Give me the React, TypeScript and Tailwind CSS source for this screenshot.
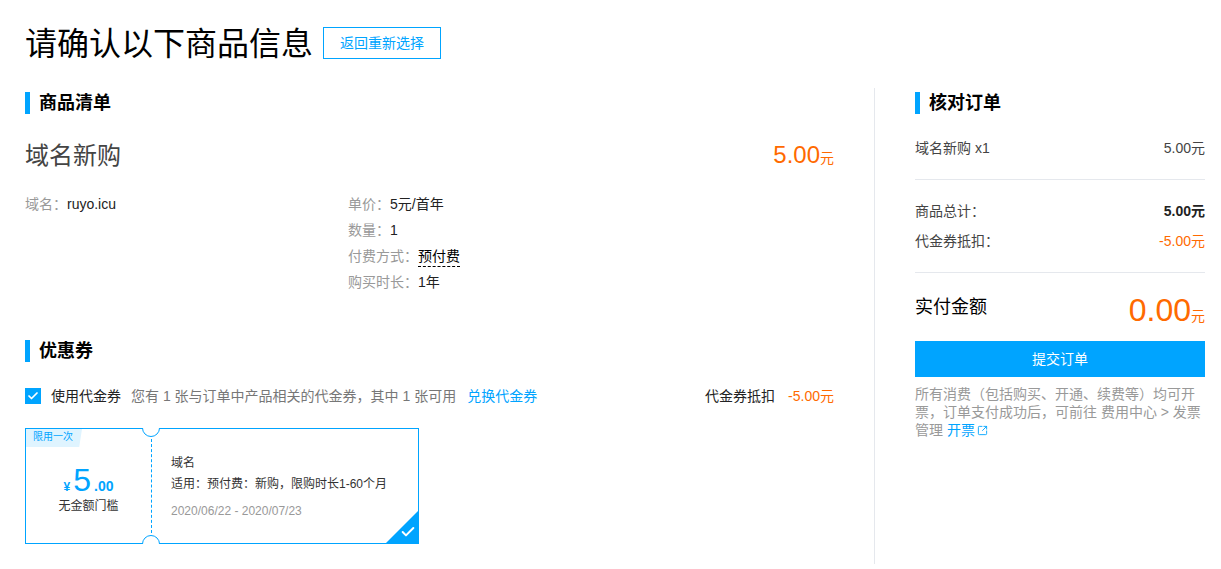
import { Check, SquareArrowOutUpRight } from 'lucide-react';

const FONT = "font-['Liberation_Sans','Noto_Sans_CJK_SC',sans-serif]";

// 全角标点
const COLON = '\uFF1A';
const COMMA = '\uFF0C';
const LP = '\uFF08';
const RP = '\uFF09';

function SectionTitle({ children }: { children: React.ReactNode }) {
  return (
    <div className="flex h-[22px] items-center border-l-[5px] border-[#00a4ff] pl-[9px] text-[18px] font-bold leading-[22px] text-black">
      {children}
    </div>
  );
}

function Info({ label, children }: { label: string; children: React.ReactNode }) {
  return (
    <div className="flex h-[26px] items-center text-[14px] text-[#222]">
      <span className="text-[#999]">{`${label}${COLON}`}</span>
      <span>{children}</span>
    </div>
  );
}

function Coupon() {
  return (
    <div className="relative mt-[22px] flex h-[116px] w-[394px] border border-[#00a4ff]">
      <div className="relative flex w-[125px] flex-col items-center justify-center pt-[5px]">
        <div className="absolute left-0 top-0 h-[18px] w-[56px] bg-[#dff4ff] pl-[7px] text-[10px] leading-[16px] text-[#00a4ff] [clip-path:polygon(0_0,100%_0,95%_100%,0_100%)]">
          限用一次
        </div>
        <div className="flex items-baseline font-bold text-[#00a4ff]">
          <span className="text-[12px]">¥</span>
          <span className="mx-[3px] text-[32px] font-normal leading-[32px]">5</span>
          <span className="text-[14px]">.00</span>
        </div>
        <div className="mt-[1px] text-[12px] leading-[16px] text-[#333]">无金额门槛</div>
      </div>
      <div className="my-[10px] border-l border-dashed border-[#00a4ff]" />
      <div className="flex flex-col pl-[19px] pt-[25px]">
        <div className="text-[12px] leading-[18px] text-[#333]">域名</div>
        <div className="mt-[3px] text-[12px] leading-[18px] text-[#333]">
          {`适用${COLON}预付费${COLON}新购${COMMA}限购时长1-60个月`}
        </div>
        <div className="mt-[9px] text-[12px] leading-[18px] text-[#999]">2020/06/22 - 2020/07/23</div>
      </div>
      {/* 上下半圆缺口 */}
      <div className="absolute left-[116px] top-[-10px] h-[18px] w-[18px] rounded-full border border-[#00a4ff] bg-white" />
      <div className="absolute left-[114px] top-[-12px] h-[11px] w-[22px] bg-white" />
      <div className="absolute bottom-[-10px] left-[116px] h-[18px] w-[18px] rounded-full border border-[#00a4ff] bg-white" />
      <div className="absolute bottom-[-12px] left-[114px] h-[11px] w-[22px] bg-white" />
      <div className="absolute bottom-[-1px] right-[-1px] h-[34px] w-[34px] bg-[#00a4ff] [clip-path:polygon(100%_0,100%_100%,0_100%)]" />
      <Check className="absolute bottom-[3px] right-[2px] h-[16px] w-[16px] text-white" strokeWidth={3} />
    </div>
  );
}

export default function App() {
  return (
    <div className={`${FONT} h-[569px] w-[1221px] overflow-hidden bg-white`}>
      <div className="flex h-[88px] items-start pl-[25px] pt-[21px]">
        <h1 className="text-[32px] font-normal leading-[46px] text-[#000]">请确认以下商品信息</h1>
        <button className="ml-[10px] mt-[6px] h-[32px] w-[118px] border border-[#00a4ff] text-[14px] text-[#00a4ff]">
          返回重新选择
        </button>
      </div>
      <div className="flex">
        <div className="ml-[25px] w-[849px] pr-[40px] pt-[4px]">
          <SectionTitle>商品清单</SectionTitle>
          <div className="mt-[22px] flex items-center justify-between">
            <span className="text-[24px] leading-[36px] text-[#444]">域名新购</span>
            <span className="pt-[1px] text-[24px] leading-[36px] text-[#ff6a00]">
              5.00<span className="text-[14px]">元</span>
            </span>
          </div>
          <div className="mt-[15px] flex">
            <div className="w-[323px]">
              <Info label="域名">ruyo.icu</Info>
            </div>
            <div>
              <Info label="单价">5元/首年</Info>
              <Info label="数量">1</Info>
              <Info label="付费方式">
                <span className="border-b border-dashed border-black pb-[2px] text-black">预付费</span>
              </Info>
              <Info label="购买时长">1年</Info>
            </div>
          </div>
          <div className="mt-[45px]">
            <SectionTitle>优惠券</SectionTitle>
          </div>
          <div className="mt-[24px] flex h-[20px] items-center text-[14px]">
            <span className="flex h-[16px] w-[16px] items-center justify-center bg-[#00a4ff]">
              <Check className="h-[12px] w-[12px] text-white" strokeWidth={3.5} />
            </span>
            <span className="ml-[10px] text-[#222]">使用代金券</span>
            <span className="ml-[10px] text-[#777]">
              {`您有 1 张与订单中产品相关的代金券${COMMA}其中 1 张可用`}
            </span>
            <span className="ml-[11px] text-[#00a4ff]">兑换代金券</span>
            <span className="ml-auto text-[#222]">代金券抵扣</span>
            <span className="ml-[13px] text-[#ff6a00]">-5.00元</span>
          </div>
          <Coupon />
        </div>
        <div className="h-[476px] w-[331px] border-l border-[#e5e8ed] pl-[40px] pt-[4px]">
          <div className="w-[290px]">
            <SectionTitle>核对订单</SectionTitle>
            <div className="mt-[24px] flex justify-between border-b border-[#e5e8ed] pb-[21px] text-[14px] leading-[20px] text-[#444]">
              <span>域名新购 x1</span>
              <span>5.00元</span>
            </div>
            <div className="mt-[21px] flex justify-between text-[14px] leading-[20px] text-[#444]">
              <span>{`商品总计${COLON}`}</span>
              <span className="font-bold text-[#222]">5.00元</span>
            </div>
            <div className="mt-[10px] flex justify-between border-b border-[#e5e8ed] pb-[21px] text-[14px] leading-[20px] text-[#444]">
              <span>{`代金券抵扣${COLON}`}</span>
              <span className="text-[#ff6a00]">-5.00元</span>
            </div>
            <div className="mt-[16px] flex items-start justify-between">
              <span className="mt-[4px] text-[18px] leading-[28px] text-black">实付金额</span>
              <span className="text-[32px] leading-[42px] text-[#ff6a00]">
                0.00<span className="text-[14px]">元</span>
              </span>
            </div>
            <button className="mt-[4px] h-[36px] w-full bg-[#00a4ff] text-[14px] text-white">提交订单</button>
            <p className="mt-[8px] text-[14px] leading-[18px] text-[#999]">
              {`所有消费${LP}包括购买、开通、续费等${RP}均可开票${COMMA}订单支付成功后${COMMA}可前往 费用中心 > 发票管理 `}
              <span className="text-[#00a4ff]">
                开票
                <SquareArrowOutUpRight className="ml-[2px] inline h-[11px] w-[11px] align-[-1px]" strokeWidth={2} />
              </span>
            </p>
          </div>
        </div>
      </div>
    </div>
  );
}
